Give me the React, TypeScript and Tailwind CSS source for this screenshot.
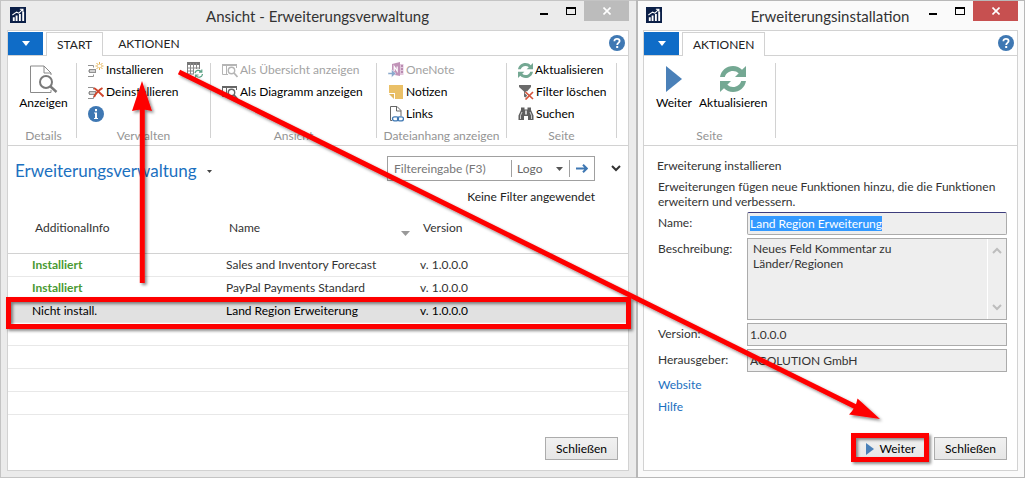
import React, { useEffect, useRef } from 'react';

interface IconProps {
  className?: string;
}

/* ---------- Icons ---------- */

const AppLogo = () => (
  <svg width="16" height="16" viewBox="0 0 17 17" aria-hidden="true">
    <rect width="17" height="17" fill="#0b1f47" />
    <path d="M3 11h2v4H3zM6 9h2v6H6zM9.500 7.500h2v7.500h-2zM13 5h2v10h-2z" fill="#fff" />
    <path d="M2.500 8.500 7 5.500l2.500 1 4-4M10.500 2.300h3.300v3.200" fill="none" stroke="#fff" strokeWidth="1.100" />
  </svg>
);

const HelpIcon = () => (
  <svg width="16" height="16" viewBox="0 0 16 16" aria-hidden="true">
    <circle cx="8" cy="8" r="8" fill="#3f78b3" />
    <path d="M5.400 6.300C5.400 4.600 6.500 3.800 8 3.800s2.600.9 2.600 2.200c0 1.900-2.400 1.900-2.400 3.900" fill="none" stroke="#fff" strokeWidth="1.800" />
    <rect x="7.200" y="11" width="2" height="2" fill="#fff" />
  </svg>
);

const InfoIcon = () => (
  <svg width="16" height="16" viewBox="0 0 16 16" aria-hidden="true">
    <circle cx="8" cy="8" r="8" fill="#3f78b3" />
    <rect x="7" y="3" width="2" height="2.200" fill="#fff" />
    <path d="M6 6.500h3V12h1v1H6v-1h1V7.500H6z" fill="#fff" />
  </svg>
);

const ViewPageIcon = () => (
  <svg width="28" height="28" viewBox="0 0 28 28" fill="none" aria-hidden="true">
    <path d="M21 10V8l-7-7H.5v26.500H21V25M14 1v7h7" stroke="#8a8a8a" />
    <circle cx="16" cy="17" r="6" fill="#fff" stroke="#7a7a7a" strokeWidth="2" />
    <path d="m20.500 21.500 6 5.500" stroke="#7a7a7a" strokeWidth="2.400" />
  </svg>
);

const RowsBase = () => (
  <g fill="none" stroke="#909090">
    <path d="M0 3.500h5.500v2M0 14.500h5.500v-2" />
    <rect x="1.500" y="7.500" width="6" height="3" fill="#d0d0d0" />
    <path d="M0 9h1" />
  </g>
);

const InstallIcon = () => (
  <svg width="16" height="16" viewBox="0 0 16 16" aria-hidden="true">
    <RowsBase />
    <g stroke="#e4b252">
      <path d="M11.500 0v2.500M11.500 5.500V8M7.500 4H10M13 4h2.500M8.500 1l2 2M12.500 5l2 2M14.500 1l-2 2M10.500 5l-2 2" />
    </g>
  </svg>
);

const UninstallIcon = () => (
  <svg width="16" height="16" viewBox="0 0 16 16" aria-hidden="true">
    <RowsBase />
    <path d="M6 4c3 2 6 5 9.500 8.500M14.500 4C11 6 8 9 6 13" fill="none" stroke="#d0452b" strokeWidth="2" />
  </svg>
);

const TableRefreshIcon = () => (
  <svg width="16" height="16" viewBox="0 0 16 16" aria-hidden="true">
    <path d="M.5.500h12V12H.5z" fill="#fff" stroke="#808080" />
    <path d="M0 0h13v3H0z" fill="#777" />
    <path d="M3.500 1v11M6.500 1v11M9.500 1v11M1 6h11.500M1 9h11.500" stroke="#8a8a8a" />
    <path d="M7 7h9v9H7z" fill="#fff" />
    <path d="M8 11a3.500 3.500 0 0 1 6-1.500M15.500 12a3.500 3.500 0 0 1-6.500 1.500M14.800 7.500v2.700H12M8.500 15.800V13h3" fill="none" stroke="#5da387" strokeWidth="1.200" />
  </svg>
);

const TableSearchIcon: React.FC<IconProps> = ({ className }) => (
  <svg width="16" height="16" viewBox="0 0 16 16" fill="none" stroke="currentColor" className={className} aria-hidden="true">
    <path d="M14.500 6V2.500H.5v10H6M4.500 4v8" />
    <path d="M0 3h15" strokeWidth="2" />
    <circle cx="9.500" cy="8.500" r="3.200" fill="#fff" strokeWidth="1.400" />
    <path d="m12 11 3.500 4" strokeWidth="1.800" />
  </svg>
);

const OneNoteIcon = () => (
  <svg width="16" height="16" viewBox="0 0 16 16" aria-hidden="true">
    <path d="M11 2h4.500v11H11z" fill="#e1c6dc" />
    <path d="M13 3h2v2h-2zM13 6h2v2h-2zM13 9h2v2h-2z" fill="#b98bb0" />
    <path d="m4 2 8-2v14l-8-1.500z" fill="#c193b8" />
    <path d="M6.200 9V4.500l3 4.500V4.500" fill="none" stroke="#fff" strokeWidth="1.200" />
    <path d="M0 10.500h3.500V7.500L8 11.500l-4.500 4v-3H0z" fill="#8aa9cc" stroke="#fff" strokeWidth=".5" />
  </svg>
);

const NoteIcon = () => (
  <svg width="16" height="16" viewBox="0 0 16 16" aria-hidden="true">
    <path d="M1 1h14v14H7V9H1z" fill="#eac067" />
    <path d="M1 10h5v5z" fill="#e2b75f" />
  </svg>
);

const LinksIcon = () => (
  <svg width="16" height="16" viewBox="0 0 16 16" fill="none" aria-hidden="true">
    <path d="M4 14.500H2.500v-14H9l4 4V10M8.500.5V5H13" stroke="#666" />
    <rect x="4.500" y="10.800" width="6" height="4" rx="2" stroke="#3f78b3" strokeWidth="1.300" />
    <rect x="9.500" y="10.800" width="6" height="4" rx="2" stroke="#3f78b3" strokeWidth="1.300" />
  </svg>
);

const RefreshIcon: React.FC<{ size: number }> = ({ size }) => (
  <svg width={size} height={size} viewBox="0 0 26 26" aria-hidden="true">
    <g fill="#74a893">
      <path d="M0 11C1 4.500 6.500 0 13 0c3.600 0 6.800 1.500 9 3.800L26 0v11H15l3.700-3.700A8.500 8.500 0 0 0 13 5c-4 0-7.200 2.500-8.200 6z" />
      <path d="M26 15c-1 6.500-6.500 11-13 11-3.600 0-6.800-1.500-9-3.800L0 26V15h11l-3.700 3.700A8.500 8.500 0 0 0 13 21c4 0 7.200-2.500 8.200-6z" />
    </g>
  </svg>
);

const ClearFilterIcon = () => (
  <svg width="16" height="16" viewBox="0 0 16 16" aria-hidden="true">
    <path d="M1 1h12v2L9 7.500V15l-3-2.500v-5L1 3z" fill="#6b6b6b" />
    <path d="m7.500 8 7.500 7M15 8l-7.500 7.500" stroke="#fff" strokeWidth="3" />
    <path d="m7.500 8 7.500 7M15 8l-7.500 7.500" stroke="#d5553c" strokeWidth="1.700" />
  </svg>
);

const BinocularsIcon = () => (
  <svg width="16" height="16" viewBox="0 0 16 16" fill="#5f5f5f" aria-hidden="true">
    <path d="M3 1.500h3.500v2h3v-2H13V4l2.500 5.500V14H10v-4H6v4H.5V9.500L3 4z" />
    <path d="M2.500 13v-3.500L4 6M13.500 13v-3.500L12 6M7.500 4.500v4M8.500 4.500v4" fill="none" stroke="#fff" strokeWidth=".7" />
  </svg>
);

const PlayIcon: React.FC<{ width: number; height: number }> = ({ width, height }) => (
  <svg width={width} height={height} viewBox="0 0 16 26" preserveAspectRatio="none" aria-hidden="true">
    <path d="M0 0 16 13 0 26z" fill="#4a80b8" />
  </svg>
);

const Caret: React.FC<IconProps> = ({ className }) => (
  <svg viewBox="0 0 8 5" preserveAspectRatio="none" className={className} aria-hidden="true">
    <path d="M0 0h8L4 5z" fill="currentColor" />
  </svg>
);

const Chevron: React.FC<IconProps> = ({ className }) => (
  <svg width="10" height="7" viewBox="0 0 10 7" fill="none" stroke="currentColor" strokeWidth="2" className={className} aria-hidden="true">
    <path d="m1 1 4 4 4-4" />
  </svg>
);

/* ---------- Window parts ---------- */

const TitleBar: React.FC<{ title: string; active?: boolean }> = ({ title, active }) => (
  <header className="flex h-[29px] shrink-0 items-start">
    <div className="w-[98px] pt-[6px] pl-[3px]">
      <AppLogo />
    </div>
    <h1 className="min-w-0 flex-1 text-center text-[15px] leading-[30px] whitespace-nowrap text-[#333]">{title}</h1>
    <div className="flex h-5 items-stretch">
      <button aria-label="Minimieren" className="flex w-[27px] items-center justify-center">
        <span className="mt-[6px] h-[2px] w-2 bg-black" />
      </button>
      <button aria-label="Maximieren" className="flex w-[27px] items-center justify-center">
        <span className="h-2 w-[10px] border border-t-2 border-black" />
      </button>
      <button
        aria-label="Fenster schließen"
        className={`flex w-[45px] items-center justify-center ${active ? 'bg-[#c75050]' : 'bg-[#bcbcbc]'}`}
      >
        <svg width="8" height="8" viewBox="0 0 8 8" stroke="#fff" strokeWidth="1.600" aria-hidden="true">
          <path d="m.5.500 7 7M7.500.500l-7 7" />
        </svg>
      </button>
    </div>
  </header>
);

const TabBar: React.FC<{ tabs: string[] }> = ({ tabs }) => (
  <nav className="flex h-6 items-stretch">
    <button aria-label="Anwendungsmenü" className="mt-px flex w-[35px] items-center justify-center bg-[#0f6cc7] text-white">
      <Caret className="h-[5px] w-2" />
    </button>
    {tabs.map((tab, i) => (
      <button
        key={tab}
        className={
          i === 0
            ? 'z-10 mt-px -mb-px ml-[3px] border border-b-0 border-[#d2d2d2] bg-white px-[10px] pt-px text-[#222]'
            : 'mt-px px-[15px] pt-px text-[#222]'
        }
      >
        {tab}
      </button>
    ))}
    <button aria-label="Hilfe" className="mr-[3px] ml-auto">
      <HelpIcon />
    </button>
  </nav>
);

const RibbonGroup: React.FC<{ label: string; className: string; children: React.ReactNode }> = ({ label, className, children }) => (
  <section className={`flex shrink-0 flex-col justify-between border-r border-[#d2d2d2] ${className}`}>
    {children}
    <div className="-mb-[3px] text-center leading-[11px] whitespace-nowrap text-[#949494]">{label}</div>
  </section>
);

const RibbonItem: React.FC<{ icon: React.ReactNode; label?: string; disabled?: boolean }> = ({ icon, label, disabled }) => (
  <button
    disabled={disabled}
    aria-label={label ?? 'Info'}
    className={`flex h-[22px] items-center gap-[2px] whitespace-nowrap ${disabled ? 'text-[#a3a3a3]' : 'text-black'}`}
  >
    {icon}
    {label}
  </button>
);

const LargeItem: React.FC<{ icon: React.ReactNode; label: string }> = ({ icon, label }) => (
  <button className="flex flex-col items-center text-black">
    <span className="flex h-8 items-center">{icon}</span>
    <span className="leading-4">{label}</span>
  </button>
);

const PushButton: React.FC<{ children: React.ReactNode }> = ({ children }) => (
  <button className="flex h-[23px] w-[73px] items-center justify-center gap-[6px] border border-[#acacac] bg-gradient-to-b from-[#f1f1f1] to-[#e6e6e6] text-black">
    {children}
  </button>
);

/* ---------- Extension list ---------- */

const extensions = [
  { info: 'Installiert', name: 'Sales and Inventory Forecast', version: 'v. 1.0.0.0', installed: true },
  { info: 'Installiert', name: 'PayPal Payments Standard', version: 'v. 1.0.0.0', installed: true },
  { info: 'Nicht install.', name: 'Land Region Erweiterung', version: 'v. 1.0.0.0', installed: false },
];

const ManagementWindow = () => (
  <div className="flex min-w-0 flex-col border-y border-l border-[#c4c4c4] bg-[#ebebeb] pr-[7px] pb-[6px] pl-[6px]">
    <TitleBar title="Ansicht - Erweiterungsverwaltung" />
    <main className="flex flex-1 flex-col border border-[#d2d2d2] bg-white">
      <TabBar tabs={['START', 'AKTIONEN']} />
      <div className="flex h-[91px] border-y border-[#d2d2d2] py-[7px]">
        <RibbonGroup label="Details" className="w-[69px] pl-[3px]">
          <LargeItem icon={<ViewPageIcon />} label="Anzeigen" />
        </RibbonGroup>
        <RibbonGroup label="Verwalten" className="w-[134px]">
          <div className="-mt-1 flex flex-col items-start pl-[11px]">
            <div className="flex items-center gap-6">
              <RibbonItem icon={<InstallIcon />} label="Installieren" />
              <button aria-label="Tabelle aktualisieren">
                <TableRefreshIcon />
              </button>
            </div>
            <RibbonItem icon={<UninstallIcon />} label="Deinstallieren" />
            <RibbonItem icon={<InfoIcon />} />
          </div>
        </RibbonGroup>
        <RibbonGroup label="Ansicht" className="w-[166px]">
          <div className="-mt-1 flex flex-col items-start pl-[11px]">
            <RibbonItem icon={<TableSearchIcon className="text-[#b5b5b5]" />} label="Als Übersicht anzeigen" disabled />
            <RibbonItem icon={<TableSearchIcon className="text-[#666]" />} label="Als Diagramm anzeigen" />
          </div>
        </RibbonGroup>
        <RibbonGroup label="Dateianhang anzeigen" className="w-[130px]">
          <div className="-mt-1 flex flex-col items-start pl-[11px]">
            <RibbonItem icon={<OneNoteIcon />} label="OneNote" disabled />
            <RibbonItem icon={<NoteIcon />} label="Notizen" />
            <RibbonItem icon={<LinksIcon />} label="Links" />
          </div>
        </RibbonGroup>
        <RibbonGroup label="Seite" className="w-[110px]">
          <div className="-mt-1 flex flex-col items-start pl-[11px]">
            <RibbonItem icon={<RefreshIcon size={15} />} label="Aktualisieren" />
            <RibbonItem icon={<ClearFilterIcon />} label="Filter löschen" />
            <RibbonItem icon={<BinocularsIcon />} label="Suchen" />
          </div>
        </RibbonGroup>
      </div>

      <div className="flex items-start justify-between px-[7px] pt-[10px]">
        <h2 className="flex items-center gap-[10px] text-[17px] leading-[30px] text-[#1b70c0]">
          Erweiterungsverwaltung
          <Caret className="h-[3px] w-[5px] text-[#444]" />
        </h2>
        <div className="flex items-center gap-4">
          <form className="flex h-[25px] w-[208px] items-center border border-[#a0a0a0] text-[#666]">
            <input aria-label="Filtereingabe" placeholder="Filtereingabe (F3)" className="w-[123px] pl-[6px] outline-none placeholder:text-[#777]" />
            <button type="button" className="flex h-[17px] flex-1 items-center justify-between border-x border-[#a0a0a0] pr-[6px] pl-[5px]">
              Logo
              <Caret className="h-1 w-[7px] text-[#555]" />
            </button>
            <button type="button" aria-label="Filter anwenden" className="flex w-6 justify-center">
              <svg width="12" height="9" viewBox="0 0 12 9" fill="none" stroke="#3f78b3" strokeWidth="2" aria-hidden="true">
                <path d="M0 4.500h10.500M7 .7l3.800 3.800L7 8.300" />
              </svg>
            </button>
          </form>
          <button aria-label="Filterbereich erweitern">
            <Chevron className="text-[#333]" />
          </button>
        </div>
      </div>
      <p className="pt-[2px] pr-[33px] pb-px text-right leading-[18px] text-[#222]">Keine Filter angewendet</p>

      <table className="w-full table-fixed border-collapse text-left text-[#333]">
        <colgroup>
          <col className="w-[217px]" />
          <col className="w-[194px]" />
          <col />
        </colgroup>
        <thead>
          <tr className="h-[46px] border-b border-[#d2d2d2]">
            <th className="pb-1 pl-[27px] font-normal">AdditionalInfo</th>
            <th className="pr-[9px] pb-1 pl-1 font-normal">
              <div className="flex items-center justify-between">
                Name
                <Caret className="mt-3 h-[5px] w-[9px] text-[#999]" />
              </div>
            </th>
            <th className="pb-1 pl-1 font-normal">Version</th>
          </tr>
        </thead>
        <tbody>
          {extensions.map((ext) => (
            <tr
              key={ext.name}
              className={`h-[23px] border-b border-[#e8e8e8] ${ext.installed ? 'bg-white' : 'bg-[#e1e1e1] text-black'}`}
            >
              <td className={`py-0 pl-6 leading-[15px] ${ext.installed ? 'font-bold text-[#4a9a33]' : ''}`}>{ext.info}</td>
              <td className="py-0 pl-px leading-[15px]">{ext.name}</td>
              <td className="py-0 pl-px leading-[15px]">{ext.version}</td>
            </tr>
          ))}
          {[0, 1, 2, 3].map((n) => (
            <tr key={n} className="h-[23px] border-b border-[#e8e8e8]">
              <td colSpan={3} />
            </tr>
          ))}
        </tbody>
      </table>

      <footer className="mt-auto flex justify-end pr-[10px] pb-[10px]">
        <PushButton>Schließen</PushButton>
      </footer>
    </main>
  </div>
);

/* ---------- Installation wizard ---------- */

const fieldClass = 'w-full min-w-0 border border-[#ababab] bg-[#eee] px-[2px] text-[#333] outline-none';

const InstallWindow = () => {
  const nameRef = useRef<HTMLInputElement>(null);

  useEffect(() => {
    nameRef.current?.focus();
    nameRef.current?.select();
  }, []);

  return (
    <div className="flex min-w-0 flex-col border border-l-2 border-[#b8b8b8] bg-[#fafafa] pr-[6px] pb-[6px] pl-[5px]">
      <TitleBar title="Erweiterungsinstallation" active />
      <main className="flex flex-1 flex-col border border-[#d2d2d2] bg-white">
        <TabBar tabs={['AKTIONEN']} />
        <div className="flex h-[91px] border-y border-[#d2d2d2] py-[7px]">
          <RibbonGroup label="Seite" className="w-[132px]">
            <div className="flex gap-[7px] pl-3">
              <LargeItem icon={<PlayIcon width={16} height={26} />} label="Weiter" />
              <LargeItem icon={<RefreshIcon size={26} />} label="Aktualisieren" />
            </div>
          </RibbonGroup>
        </div>

        <div className="pt-[11px] pr-[10px] pl-[14px] text-[#333]">
          <h2 className="-ml-px leading-[18px]">Erweiterung installieren</h2>
          <p className="pt-1 pb-[3px] leading-[15px]">
            Erweiterungen fügen neue Funktionen hinzu, die die Funktionen erweitern und verbessern.
          </p>
          <div className="grid grid-cols-[89px_1fr] gap-y-[3px]">
            <label htmlFor="name" className="leading-[22px]">Name:</label>
            <input
              id="name"
              ref={nameRef}
              readOnly
              defaultValue="Land Region Erweiterung"
              className={`${fieldClass} h-[23px] rounded-[2px] border-t-[#3c3c7c] leading-[15px] selection:bg-[#3399ff] selection:text-white`}
            />
            <label htmlFor="description" className="leading-[22px]">Beschreibung:</label>
            <div className="flex h-[82px] border border-[#ababab] bg-[#eee]">
              <textarea
                id="description"
                readOnly
                defaultValue={'Neues Feld Kommentar zu\nLänder/Regionen'}
                className="min-w-0 flex-1 resize-none overflow-hidden border-r border-white px-[5px] pt-[2px] leading-[15px] outline-none"
              />
              <div className="flex w-[18px] flex-col items-center justify-between py-2 text-[#bdbdbd]">
                <Chevron className="rotate-180" />
                <Chevron />
              </div>
            </div>
            <label htmlFor="version" className="leading-[22px]">Version:</label>
            <input id="version" readOnly defaultValue="1.0.0.0" className={`${fieldClass} h-[23px]`} />
            <label htmlFor="publisher" className="leading-[22px]">Herausgeber:</label>
            <input id="publisher" readOnly defaultValue="AGOLUTION GmbH" className={`${fieldClass} h-[23px]`} />
          </div>
          <div className="flex flex-col items-start pt-[2px] leading-[22px] text-[#1b70c0]">
            <a href="#website">Website</a>
            <a href="#hilfe">Hilfe</a>
          </div>
        </div>

        <footer className="mt-auto flex justify-end gap-[7px] pr-[10px] pb-[10px]">
          <PushButton>
            <PlayIcon width={8} height={12} />
            Weiter
          </PushButton>
          <PushButton>Schließen</PushButton>
        </footer>
      </main>
    </div>
  );
};

/* Red walkthrough marks that point from the ribbon to the next step */
const Annotations = () => (
  <svg
    viewBox="0 0 1025 478"
    preserveAspectRatio="none"
    className="pointer-events-none absolute inset-0 z-20 size-full"
    aria-hidden="true"
  >
    <defs>
      <filter id="mark-shadow" x="-10%" y="-10%" width="120%" height="120%">
        <feDropShadow dx="2" dy="2" stdDeviation="1.500" floodColor="#000" floodOpacity="0.450" />
      </filter>
    </defs>
    <g filter="url(#mark-shadow)" fill="none" stroke="#fe0000" strokeWidth="5">
      <rect x="8.500" y="299.500" width="620" height="27" />
      <rect x="853.500" y="435.500" width="73" height="24" />
      <path d="M142.300 283V106" />
      <path d="M179 72 856 407" />
      <path d="m142 81 10 30q-10-3-20 0z" fill="#fe0000" stroke="none" />
      <path d="m880 419-22.500-20.500q-1.500 9-8.500 16z" fill="#fe0000" stroke="none" />
    </g>
  </svg>
);

export default function App() {
  return (
    <div className="relative grid min-h-screen grid-cols-[minmax(0,636fr)_minmax(0,389fr)] bg-[#ebebeb] font-['Lato','Open_Sans',sans-serif] text-[12px]">
      <ManagementWindow />
      <InstallWindow />
      <Annotations />
    </div>
  );
}
